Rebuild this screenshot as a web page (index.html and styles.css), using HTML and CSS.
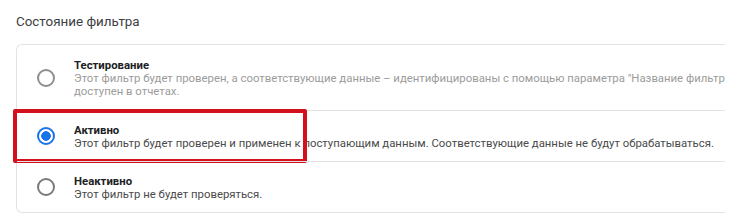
FILE: index.html
```html
<!DOCTYPE html>
<html lang="ru">
<head>
  <meta charset="UTF-8">
  <title>Состояние фильтра</title>
  <link rel="stylesheet" href="styles.css">
</head>
<body>
  <div class="section">
    <h3 class="section-title">Состояние фильтра</h3>

    <div class="card">
      <label class="option muted">
        <span class="radio"></span>
        <span class="option-text">
          <span class="option-title">Тестирование</span>
          <span class="option-desc">Этот фильтр будет проверен, а соответствующие данные – идентифицированы с помощью параметра "Название фильтра". Фильтр будет</span>
          <span class="option-desc">доступен в отчетах.</span>
        </span>
      </label>

      <label class="option selected">
        <span class="radio"></span>
        <span class="option-text">
          <span class="option-title">Активно</span>
          <span class="option-desc">Этот фильтр будет проверен и применен к поступающим данным. Соответствующие данные не будут обрабатываться.</span>
        </span>
        <span class="highlight"></span>
      </label>

      <label class="option">
        <span class="radio"></span>
        <span class="option-text">
          <span class="option-title">Неактивно</span>
          <span class="option-desc">Этот фильтр не будет проверяться.</span>
        </span>
      </label>
    </div>
  </div>
</body>
</html>
```

FILE: styles.css
```css
body {
  margin: 0;
  background-color: #ffffff;
  font-family: Roboto, "Noto Sans", Arial, sans-serif;
  color: #3c4043;
}
.section {
  padding: 13px 0 0 16px;
  width: 709px;
}
.section-title {
  margin: 0 0 14px 0;
  font-size: 13.4px;
  font-weight: 400;
  line-height: 17px;
  color: #3c4043;
}
.card {
  border: 1px solid #e3e3e3;
  border-right: none;
  border-radius: 6px 0 0 6px;
}
.option {
  position: relative;
  display: flex;
  align-items: center;
  border-top: 1px solid #e3e3e3;
}
.option:first-child {
  border-top: none;
  height: 65px;
}
.option.selected,
.option:last-child {
  height: 50px;
}
.radio {
  width: 14px;
  height: 14px;
  margin: 0 19px 0 20px;
  border: 2px solid #7a7a7a;
  border-radius: 50%;
  flex-shrink: 0;
  box-sizing: content-box;
}
.muted .radio {
  border-color: #8e8e8e;
}
.selected .radio {
  border-color: #1a73e8;
  background: radial-gradient(circle, #1a73e8 0, #1a73e8 4.5px, transparent 5px);
}
.option-text {
  display: flex;
  flex-direction: column;
  min-width: 0;
  overflow: hidden;
  padding-top: 1px;
}
.option-title {
  font-size: 11.35px;
  font-weight: bold;
  line-height: 14px;
  color: #202124;
}
.option-desc {
  font-size: 11.35px;
  line-height: 13px;
  color: #4a4a4a;
  white-space: nowrap;
}
.muted .option-desc {
  color: #9b9b9b;
}
.highlight {
  position: absolute;
  left: -4px;
  top: -2px;
  width: 286px;
  height: 46px;
  border: 4px solid #d3111c;
  border-radius: 2px;
}
```
